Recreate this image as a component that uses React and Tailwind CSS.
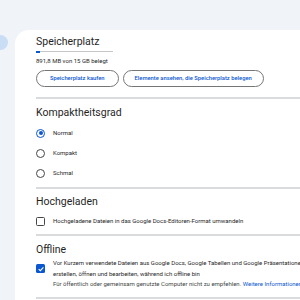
import React from "react";

const sans = { fontFamily: "Roboto, 'Noto Sans', Arial, sans-serif" };

function Divider({ className = "" }) {
  return <div className={"h-[2px] bg-[#d9dbdc] " + className} />;
}

function Heading({ children, className = "" }) {
  return (
    <h2 className={"text-[10.5px] leading-[13px] text-[#1f1f1f] font-normal " + className}>
      {children}
    </h2>
  );
}

function Radio({ checked, label }) {
  return (
    <div className="flex items-center h-[20px]">
      <span
        className={
          "w-[9px] h-[9px] rounded-full flex items-center justify-center border-[1.5px] " +
          (checked ? "border-[#0b57d0]" : "border-[#444746]")
        }
      >
        {checked && <span className="w-[4px] h-[4px] rounded-full bg-[#0b57d0]" />}
      </span>
      <span className="ml-[8px] text-[6px] leading-[8px] text-[#1f1f1f]">{label}</span>
    </div>
  );
}

function Checkbox({ checked }) {
  if (checked) {
    return (
      <span className="w-[9px] h-[9px] rounded-[1.5px] bg-[#0b57d0] flex items-center justify-center shrink-0">
        <svg viewBox="0 0 12 12" className="w-[8px] h-[8px]">
          <path d="M2.5 6.2 L5 8.6 L9.6 3.6" fill="none" stroke="#fff" strokeWidth="1.6" />
        </svg>
      </span>
    );
  }
  return <span className="w-[9px] h-[9px] rounded-[1.5px] border-[1.5px] border-[#444746] shrink-0" />;
}

export default function App() {
  return (
    <div className="w-[300px] h-[300px] overflow-hidden bg-[#f0f4f9] flex" style={sans}>
      <div className="w-[15px] shrink-0 pt-[35px]">
        <div className="w-[15px] h-[15px] -ml-[7px] rounded-full bg-[#c9ddf5]" />
      </div>

      <div className="mt-[30px] w-[420px] shrink-0 bg-white rounded-tl-[14px] pl-[21px] pt-[5px]">
        {/* Speicherplatz */}
        <Heading>Speicherplatz</Heading>
        <div className="mt-[3px] w-[77px] h-[1px] bg-[#c4c7c5] flex">
          <div className="w-[4px] h-[2px] -mt-[0.5px] bg-[#0b57d0]" />
        </div>
        <p className="mt-[5px] text-[6px] leading-[8px] text-[#1f1f1f]">891,8 MB von 15 GB belegt</p>
        <div className="mt-[5px] flex gap-[4px]">
          <button className="h-[17px] px-[13px] rounded-full border border-[#747775] text-[5.8px] font-medium text-[#0b57d0]">
            Speicherplatz kaufen
          </button>
          <button className="h-[17px] px-[11px] rounded-full border border-[#747775] text-[5.8px] font-medium text-[#0b57d0]">
            Elemente ansehen, die Speicherplatz belegen
          </button>
        </div>
        <Divider className="mt-[10px]" />

        {/* Kompaktheitsgrad */}
        <Heading className="mt-[7px]">Kompaktheitsgrad</Heading>
        <div className="mt-[4px]">
          <Radio checked label="Normal" />
          <Radio label="Kompakt" />
          <Radio label="Schmal" />
        </div>
        <Divider className="mt-[4px]" />

        {/* Hochgeladen */}
        <Heading className="mt-[6px]">Hochgeladen</Heading>
        <div className="mt-[6px] h-[14px] flex items-center">
          <Checkbox />
          <span className="ml-[8px] text-[6px] leading-[8px] text-[#1f1f1f]">
            Hochgeladene Dateien in das Google Docs-Editoren-Format umwandeln
          </span>
        </div>
        <Divider className="mt-[6px]" />

        {/* Offline */}
        <Heading className="mt-[7px]">Offline</Heading>
        <div className="mt-[2px] flex">
          <div className="h-[21px] flex items-center">
            <Checkbox checked />
          </div>
          <div className="ml-[8px] text-[6px] leading-[10.5px] text-[#1f1f1f]">
            <p className="whitespace-nowrap">
              Vor Kurzem verwendete Dateien aus Google Docs, Google Tabellen und Google Präsentationen auf diesem Gerät
            </p>
            <p className="whitespace-nowrap">erstellen, öffnen und bearbeiten, während ich offline bin</p>
            <p className="whitespace-nowrap text-[#444746]">
              Für öffentlich oder gemeinsam genutzte Computer nicht zu empfehlen.{" "}
              <span className="text-[#0b57d0]">Weitere Informationen</span>
            </p>
          </div>
        </div>
        <Divider className="mt-[7px]" />
      </div>
    </div>
  );
}
